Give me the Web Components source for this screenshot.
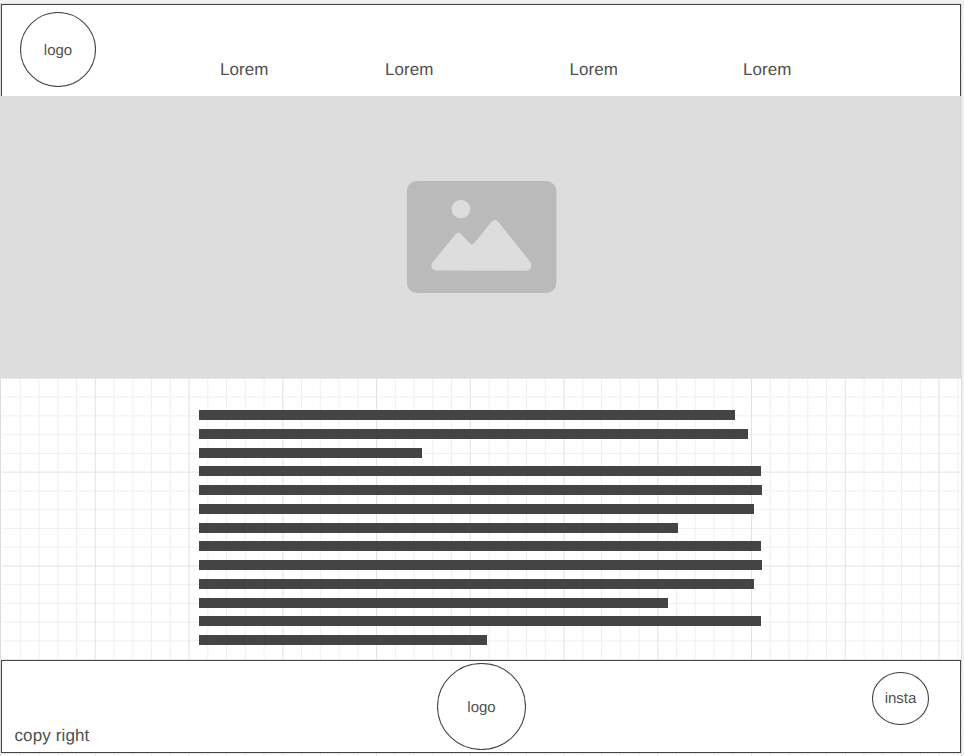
<!DOCTYPE html>
<html lang="en">
<head>
<meta charset="utf-8">
<title>Wireframe</title>
<style>
html,body{margin:0;height:100%;overflow:hidden;background:#f2f2f2;font-family:"Liberation Sans",Arial,sans-serif;color:#505050;text-rendering:geometricPrecision}
</style>
</head>
<body>
<wire-page>
  <wire-header slot="header">
    <wire-circle slot="logo" w="76" h="75">logo</wire-circle>
    <span>Lorem</span><span>Lorem</span><span>Lorem</span><span>Lorem</span>
  </wire-header>
  <image-placeholder></image-placeholder>
  <text-bars widths="536,549,223,562,563,555,479,562,563,555,469,562,288"></text-bars>
  <wire-footer slot="footer">
    <span slot="left">copy right</span>
    <wire-circle slot="center" w="89" h="87">logo</wire-circle>
    <wire-circle class="lifted" slot="right" w="57" h="53">insta</wire-circle>
  </wire-footer>
</wire-page>
<script>
class WirePage extends HTMLElement{
  constructor(){
    super();
    const root=this.attachShadow({mode:'open'});
    // Grid step is 18.75px with a heavier line every fifth step.
    let lines='';
    for(const major of [0,1]){
      for(let k=1;k<=51;k++) if((k%5===0)==major){
        const c=major?'#e1e1e1':'#efefef';
        lines+=`<path d="M${1.55+18.75*k} 0V753" stroke="${c}"/>`;
      }
      for(let k=-20;k<=20;k++) if((k%5===0)==major){
        const c=major?'#e3e3e3':'#efefef', y=375.4+18.75*k;
        if(y>0&&y<753) lines+=`<path d="M2 ${y}H962" stroke="${c}"/>`;
      }
    }
    root.innerHTML=`<style>
      :host{display:grid;grid-template-rows:93px 282px 282px 95px;box-sizing:border-box;width:962px;height:756px;position:relative;padding-top:3px;background:#f2f2f2}
      .sheet{position:absolute;inset:3px 0 0 0;width:960px;height:752px;background:#fff;border:solid #dcdcdc;border-width:1px 1px 0 1px}
      svg{position:absolute;left:0;top:3px;width:962px;height:753px}
      ::slotted(*){position:relative}
    </style><div class="sheet"></div><svg viewBox="0 0 962 753" fill="none" stroke-width="1">${lines}</svg>
    <slot name="header"></slot><slot></slot><slot name="footer"></slot>`;
  }
}
class WireCircle extends HTMLElement{
  constructor(){
    super();
    const w=+this.getAttribute('w'),h=+this.getAttribute('h');
    this.attachShadow({mode:'open'}).innerHTML=`<style>
      :host{display:grid;place-items:center;width:${w}px;height:${h}px;font-size:15px;line-height:17px}
      svg,span{grid-area:1/1}
      span{margin-top:1px}
      :host(.lifted) span{margin:0 0 1px}
    </style><svg width="${w}" height="${h}"><ellipse cx="${w/2}" cy="${h/2}" rx="${w/2-.5}" ry="${h/2-.5}" fill="#fff" stroke="#484848" stroke-width="1.1"/></svg><span><slot></slot></span>`;
  }
}
class WireHeader extends HTMLElement{
  constructor(){
    super();
    this.attachShadow({mode:'open'}).innerHTML=`<style>
      :host{display:flex;box-sizing:border-box;width:960px;height:92px;margin:1px 0 0 1px;border:1px solid #444;border-bottom:0;background:#fff;padding:7px 0 0 18px}
      nav{display:grid;grid-template-columns:165px 184.5px 173.5px auto;margin:48px 0 0 124px;height:20px;font-size:17px;letter-spacing:.08px;line-height:20px}
    </style><slot name="logo"></slot><nav><slot></slot></nav>`;
  }
}
class ImagePlaceholder extends HTMLElement{
  constructor(){
    super();
    this.attachShadow({mode:'open'}).innerHTML=`<style>
      :host{display:flex;justify-content:center;box-sizing:border-box;width:962px;height:282px;padding-top:85px;background:#ddd}
      svg{display:block}
    </style><svg width="151" height="112" viewBox="-.4 0 151 112">
      <rect x=".5" width="149.500" height="112" rx="10" fill="#bababa"/>
      <circle cx="54.5" cy="28" r="9.3" fill="#ddd"/>
      <path fill="#ddd" d="M30.5 89.5C25 89.5 23.5 84.5 26.5 81L49 53.5Q52 50 55 53.5L63 62Q65.500 64.500 68 62L85 41Q88.500 37 92 41L123.500 80.500C126.500 84.500 124.500 89.700 119.500 89.700Z"/>
    </svg>`;
  }
}
class TextBars extends HTMLElement{
  constructor(){
    super();
    const bars=this.getAttribute('widths').split(',').map(w=>`<i style="width:${w}px"></i>`).join('');
    this.attachShadow({mode:'open'}).innerHTML=`<style>
      :host{display:flex;flex-direction:column;gap:8.75px;box-sizing:border-box;height:282px;padding:32px 0 0 199px}
      i{display:block;flex:none;height:10px;background:#444}
    </style>${bars}`;
  }
}
class WireFooter extends HTMLElement{
  constructor(){
    super();
    this.attachShadow({mode:'open'}).innerHTML=`<style>
      :host{display:grid;grid-template-columns:422.500px 1fr 88px;box-sizing:border-box;width:960px;height:93px;margin-left:1px;border:1px solid #444;background:#fff;padding:2px 0 0 12.500px;font-size:17px;line-height:20px}
      .l{padding-top:63px;letter-spacing:.12px}.r{padding-top:9px}
    </style><div class="l"><slot name="left"></slot></div><div><slot name="center"></slot></div><div class="r"><slot name="right"></slot></div>`;
  }
}
customElements.define('wire-page',WirePage);
customElements.define('wire-circle',WireCircle);
customElements.define('wire-header',WireHeader);
customElements.define('image-placeholder',ImagePlaceholder);
customElements.define('text-bars',TextBars);
customElements.define('wire-footer',WireFooter);
</script>
</body>
</html>
